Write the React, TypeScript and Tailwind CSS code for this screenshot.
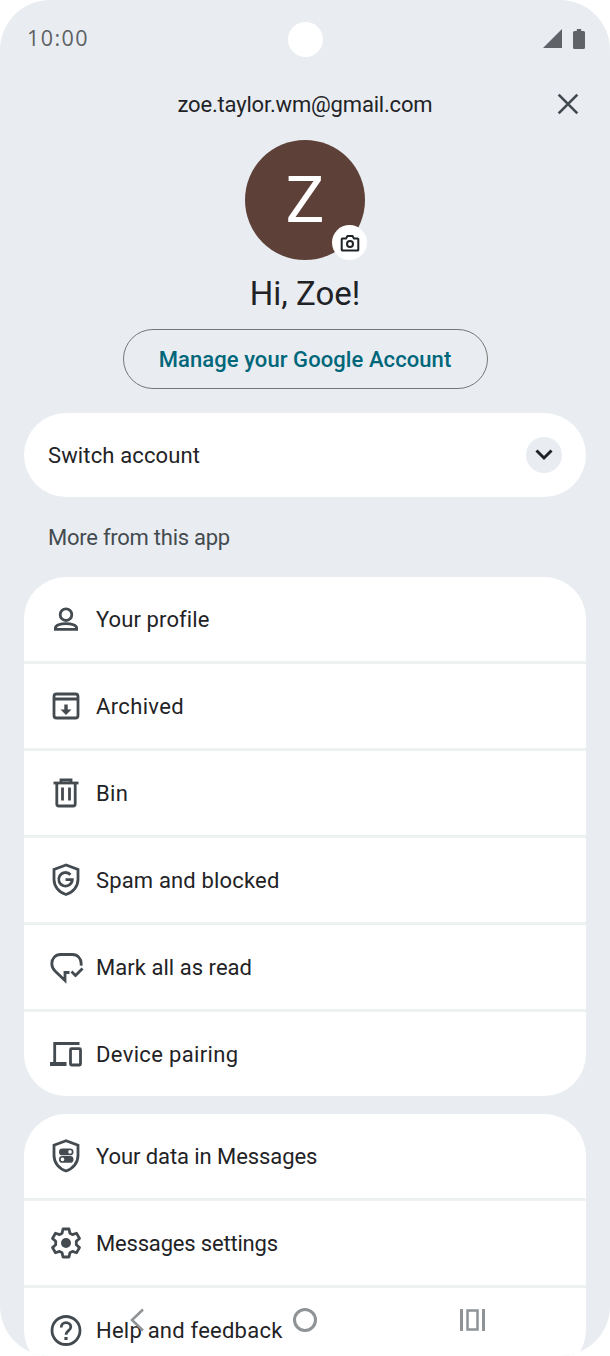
import type { ReactNode } from "react";

function Icon({ children }: { children: ReactNode }) {
  return (
    <svg viewBox="0 0 32 32" className="w-8 h-8 text-[#444b50] shrink-0 overflow-visible">
      <g fill="none" stroke="currentColor" strokeWidth={2.8}>
        {children}
      </g>
    </svg>
  );
}

const profileIcon = (
  <Icon>
    <circle cx="16" cy="11.700" r="5.800" />
    <path d="M5.400 26.300v-1.400c0-2.500 5-4.300 10.600-4.300s10.600 1.800 10.600 4.300v1.400z" />
  </Icon>
);

const archiveIcon = (
  <Icon>
    <rect x="4" y="4" width="24" height="24" rx="2.500" />
    <path d="M4 9h24" />
    <path d="M16 14.500v6" strokeWidth="3.400" />
    <path d="M10.500 19.500h11L16 25z" fill="currentColor" stroke="none" />
  </Icon>
);

const binIcon = (
  <Icon>
    <path d="M3.500 6h25" />
    <path d="M11 6V3h10v3" />
    <path d="M6.800 6v21a2 2 0 0 0 2 2h14.400a2 2 0 0 0 2-2V6" />
    <path d="M12.500 10.500v13M19.500 10.500v13" />
  </Icon>
);

const spamIcon = (
  <Icon>
    <path d="M16 1 4 5.500v10c0 7 5 13 12 15 7-2 12-8 12-15v-10z" />
    <path d="M20.500 10.700a6.800 6.800 0 1 0 1.800 5H15.500" />
  </Icon>
);

const markReadIcon = (
  <Icon>
    <path d="M19.500 21.500H15v8L5 20C3 18 1.800 15 1.800 12.500 1.800 7.500 5.500 3.500 10.500 3.500h12c5 0 8.700 4 8.700 9 0 .8-.1 1.500-.3 2.200" />
    <path d="m21.500 20.500 4 4 7-7" />
  </Icon>
);

const deviceIcon = (
  <Icon>
    <path d="M29.500 5.500H4.700v19" />
    <path d="M0 26h16.500" strokeWidth="4" />
    <rect x="20.500" y="10.700" width="10" height="16.300" rx="1" />
  </Icon>
);

const dataIcon = (
  <Icon>
    <path d="M16 .8 4 5.300v10.200c0 7.300 5 13.500 12 15.500 7-2 12-8.200 12-15.500V5.300z" />
    <rect x="9" y="8.500" width="14.500" height="6.800" rx="3.400" fill="currentColor" stroke="none" />
    <circle cx="20" cy="11.900" r="1.800" fill="#fff" stroke="none" />
    <rect x="9" y="16" width="14.500" height="6.800" rx="3.400" fill="currentColor" stroke="none" />
    <circle cx="12.500" cy="19.400" r="1.800" fill="#fff" stroke="none" />
  </Icon>
);

const settingsIcon = (
  <Icon>
    <path d="M13 2h6l.9 4.200 2.500 1.400 4.100-1.400 3 5.200-3.200 2.900v3.400l3.200 2.900-3 5.200-4.100-1.400-2.500 1.400L19 30h-6l-.9-4.200-2.500-1.400-4.100 1.400-3-5.200 3.200-2.900v-3.400l-3.200-2.900 3-5.200 4.100 1.400 2.500-1.400z" strokeLinejoin="round" />
    <circle cx="16" cy="16" r="5" fill="currentColor" stroke="none" />
  </Icon>
);

const helpIcon = (
  <Icon>
    <circle cx="16" cy="16.500" r="14" />
    <path d="M11.200 13.500c0-3 2.200-4.800 4.800-4.800s4.800 1.800 4.800 4.300c0 3.700-4.800 3.500-4.800 7.800" />
    <path d="M16 23v3" strokeWidth="3.200" />
  </Icon>
);

function Row({ icon, label, tracking }: { icon: ReactNode; label: string; tracking: string }) {
  return (
    <div className="h-[84px] flex items-center pl-[26px] gap-[14px] bg-white shrink-0">
      {icon}
      <span className={`text-[22px] text-[#1f2326] ${tracking}`}>{label}</span>
    </div>
  );
}

export default function App() {
  return (
    <div className="relative w-[610px] h-[1356px] overflow-hidden bg-white font-['Roboto',sans-serif]">
      <div className="h-full rounded-[50px] overflow-hidden bg-[#e9edf2] flex flex-col">
        {/* status bar */}
        <div className="relative h-[77px] shrink-0 flex items-center justify-between pl-[27px] pr-[25px]">
          <span className="text-[21.500px] tracking-[1.400px] text-[#5d6163] font-['Open_Sans',sans-serif] -mt-[1px]">
            10:00
          </span>
          <div className="flex items-center gap-[11px]">
            <svg viewBox="0 0 19 19" className="w-[19px] h-[19px] text-[#5f6368]">
              <path d="M19 0v19H0z" fill="currentColor" />
            </svg>
            <svg viewBox="0 0 12 20" className="w-[12px] h-[20px] text-[#5f6368]">
              <path d="M3.800 0h4.400v2h2.300A1.500 1.500 0 0 1 12 3.500v15a1.500 1.500 0 0 1-1.500 1.500h-9A1.500 1.500 0 0 1 0 18.500v-15A1.500 1.500 0 0 1 1.500 2h2.300z" fill="currentColor" />
            </svg>
          </div>
          <div className="absolute left-[288px] top-[22px] w-[35px] h-[35px] rounded-full bg-white" />
        </div>

        {/* account header */}
        <div className="relative h-[54px] shrink-0 flex items-center justify-center">
          <span className="text-[22px] tracking-[-0.180px] text-[#1f2326]">zoe.taylor.wm@gmail.com</span>
          <svg viewBox="0 0 20 20" className="absolute right-[31px] top-[16px] w-[22px] h-[22px] text-[#444b50]">
            <path d="M1.500 1.500l17 17M18.500 1.500l-17 17" stroke="currentColor" strokeWidth="2.400" fill="none" />
          </svg>
        </div>

        <div className="flex flex-col items-center shrink-0 mt-[9px]">
          <div className="relative w-[120px] h-[120px] rounded-full bg-[#5d4037] flex items-center justify-center">
            <span className="text-[65px] leading-none text-white">Z</span>
            <div className="absolute left-[87px] top-[85px] w-[35px] h-[35px] rounded-full bg-white flex items-center justify-center">
              <svg viewBox="0 0 20 20" className="w-[20px] h-[20px]" fill="none" stroke="#1f2326" strokeWidth="2">
                <path d="M2.500 5.500h3.500L7.500 3h5l1.500 2.500h3.500a.8.8 0 0 1 .8.8v10.400a.8.8 0 0 1-.8.8h-15a.8.8 0 0 1-.8-.8V6.300a.8.8 0 0 1 .8-.8z" />
                <circle cx="10" cy="11" r="3" />
              </svg>
            </div>
          </div>
          <span className="mt-[14px] text-[33px] leading-[40px] text-[#1f2326]">Hi, Zoe!</span>
          <div className="mt-[15px] w-[365px] h-[60px] rounded-full border border-[#747775] flex items-center justify-center">
            <span className="text-[22px] tracking-[0.080px] font-medium text-[#00677a]">Manage your Google Account</span>
          </div>
        </div>

        {/* switch account */}
        <div className="mx-[24px] mt-[24px] h-[84px] shrink-0 rounded-[42px] bg-white flex items-center justify-between pl-[24px] pr-[24px]">
          <span className="text-[22px] tracking-[0.130px] text-[#1f2326]">Switch account</span>
          <div className="w-[36px] h-[36px] rounded-full bg-[#e9edf2] flex items-center justify-center">
            <svg viewBox="0 0 18 12" className="w-[18px] h-[12px]">
              <path d="M1.500 1.500 9 9l7.500-7.500" fill="none" stroke="#1f2326" strokeWidth="3" />
            </svg>
          </div>
        </div>

        <div className="pl-[48px] mt-[26px] text-[22px] leading-[30px] tracking-[-0.250px] text-[#444b50] shrink-0">
          More from this app
        </div>

        <div className="mx-[24px] mt-[24px] rounded-[42px] overflow-hidden flex flex-col gap-[3px] bg-[#edf1f2] shrink-0">
          <Row icon={profileIcon} label="Your profile" tracking="tracking-[0.100px]" />
          <Row icon={archiveIcon} label="Archived" tracking="tracking-[0.350px]" />
          <Row icon={binIcon} label="Bin" tracking="tracking-[0.350px]" />
          <Row icon={spamIcon} label="Spam and blocked" tracking="tracking-[0.160px]" />
          <Row icon={markReadIcon} label="Mark all as read" tracking="tracking-[0.040px]" />
          <Row icon={deviceIcon} label="Device pairing" tracking="tracking-[0.350px]" />
        </div>

        <div className="mx-[24px] mt-[18px] rounded-[42px] overflow-hidden flex flex-col gap-[3px] bg-[#edf1f2] shrink-0">
          <Row icon={dataIcon} label="Your data in Messages" tracking="tracking-[-0.080px]" />
          <Row icon={settingsIcon} label="Messages settings" tracking="tracking-[-0.180px]" />
          <Row icon={helpIcon} label="Help and feedback" tracking="tracking-[0.230px]" />
        </div>
      </div>

      {/* nav bar floats above the list */}
      <div className="absolute left-0 top-[1304px] w-full h-[32px] pointer-events-none">
        <svg viewBox="0 0 16 24" className="absolute left-[129px] top-[4px] w-[16px] h-[24px]">
          <path d="M14 1.500 3 12l11 10.500" fill="none" stroke="#8f9396" strokeWidth="2.500" />
        </svg>
        <div className="absolute left-[293px] top-[4px] w-[24px] h-[24px] rounded-full border-[3px] border-[#8f9396]" />
        <svg viewBox="0 0 25 22" className="absolute left-[460px] top-[5px] w-[25px] h-[22px]">
          <path d="M1.500 0v22M23.500 0v22" stroke="#8f9396" strokeWidth="3" />
          <rect x="7.500" y="1.500" width="10" height="19" fill="none" stroke="#8f9396" strokeWidth="2.500" />
        </svg>
      </div>
    </div>
  );
}
